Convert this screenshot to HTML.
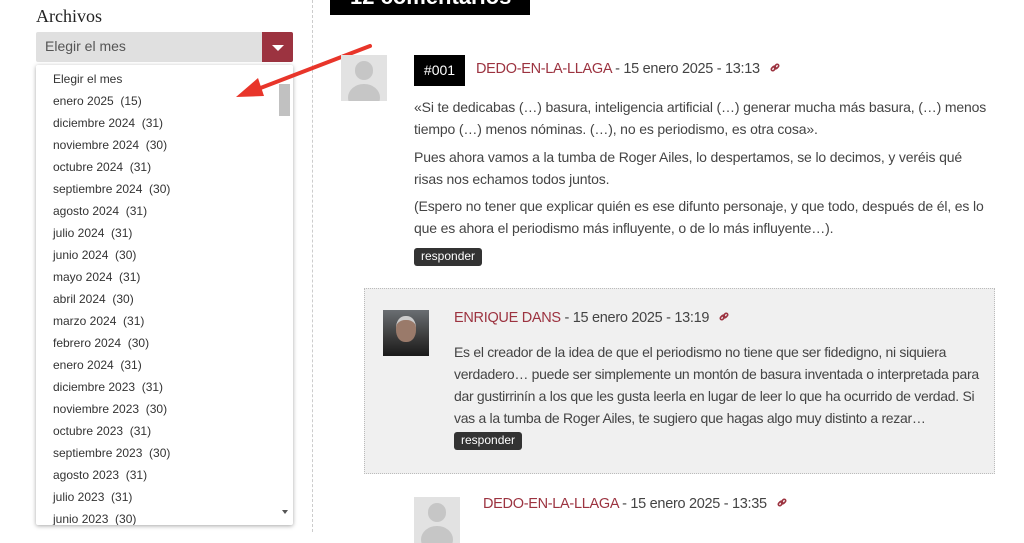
<!DOCTYPE html>
<html><head><meta charset="utf-8"><style>
*{margin:0;padding:0;box-sizing:border-box}
body{width:1024px;height:532px;overflow:hidden;background:#fff;font-family:"Liberation Sans",sans-serif;color:#444;position:relative}
.abs{position:absolute}
h3{position:absolute;left:36px;top:6px;font-family:"Liberation Serif",serif;font-weight:normal;font-size:18px;color:#222}
.sel{left:36px;top:32px;width:257px;height:30px;background:#e0e0e0;border-radius:2px;font-size:14px;color:#555;padding:6px 9px}
.btn{left:262px;top:32px;width:31px;height:30px;background:#9c3340;border-radius:0 2px 2px 0}
.btn:after{content:"";position:absolute;left:10px;top:13px;border-left:6px solid transparent;border-right:6px solid transparent;border-top:6px solid #fff}
.dd{left:36px;top:65px;width:257px;height:460px;background:#fff;box-shadow:0 1px 4px rgba(0,0,0,.35);border-radius:2px;overflow:hidden}
.dd div{position:absolute;left:17px;font-size:12px;color:#333;white-space:pre}
.sb{left:279px;top:84px;width:11px;height:32px;background:#c1c1c1}
.vl{left:312px;top:0;height:532px;border-left:1px dashed #ccc}
.title{left:330px;top:-10px;width:200px;height:25px;background:#000;color:#fff;font-weight:bold;font-size:22px;padding-left:20px;line-height:14px;overflow:hidden}
.av{background:#e2e2e2;overflow:hidden}
.av:before{content:"";position:absolute;left:30%;top:14%;width:40%;height:40%;border-radius:50%;background:#c6c6c6}
.av:after{content:"";position:absolute;left:15%;top:62%;width:70%;height:60%;border-radius:50%;background:#c6c6c6}
.num{left:414px;top:55px;width:51px;height:31px;background:#000;color:#fff;font-size:14px;text-align:center;line-height:31px}
.meta{font-size:14.5px;color:#444;white-space:nowrap;letter-spacing:-0.3px}
.meta b{font-weight:normal;color:#9c3340}
.p{font-size:14px;line-height:22px;color:#444;white-space:nowrap;width:620px;letter-spacing:-0.15px}
.rb{background:#333;color:#fff;font-size:12px;border-radius:3px;height:18px;line-height:17px;padding:0 7px}
.box{left:364px;top:288px;width:631px;height:186px;background:#f0f0f0;border:1px dotted #bbb}
</style></head><body>
<h3>Archivos</h3>
<div class="abs sel">Elegir el mes</div>
<div class="abs btn"></div>
<div class="abs dd">
<div style="top:7px">Elegir el mes</div>
<div style="top:29px">enero 2025  (15)</div>
<div style="top:51px">diciembre 2024  (31)</div>
<div style="top:73px">noviembre 2024  (30)</div>
<div style="top:95px">octubre 2024  (31)</div>
<div style="top:117px">septiembre 2024  (30)</div>
<div style="top:139px">agosto 2024  (31)</div>
<div style="top:161px">julio 2024  (31)</div>
<div style="top:183px">junio 2024  (30)</div>
<div style="top:205px">mayo 2024  (31)</div>
<div style="top:227px">abril 2024  (30)</div>
<div style="top:249px">marzo 2024  (31)</div>
<div style="top:271px">febrero 2024  (30)</div>
<div style="top:293px">enero 2024  (31)</div>
<div style="top:315px">diciembre 2023  (31)</div>
<div style="top:337px">noviembre 2023  (30)</div>
<div style="top:359px">octubre 2023  (31)</div>
<div style="top:381px">septiembre 2023  (30)</div>
<div style="top:403px">agosto 2023  (31)</div>
<div style="top:425px">julio 2023  (31)</div>
<div style="top:447px">junio 2023  (30)</div>
</div>
<div class="abs sb"></div>
<div class="abs" style="left:282px;top:510px;border-left:3px solid transparent;border-right:3px solid transparent;border-top:4px solid #555"></div>
<div class="abs vl"></div>
<div class="abs title">12 comentarios</div>
<svg class="abs" style="left:230px;top:40px" width="150" height="65"><line x1="140" y1="6" x2="20" y2="52" stroke="#e8352a" stroke-width="4" stroke-linecap="round"/><polygon points="6,57 28,38 34,56" fill="#e8352a"/></svg>

<div class="abs av" style="left:341px;top:55px;width:46px;height:46px"></div>
<div class="abs num">#001</div>
<div class="abs meta" style="left:476px;top:61px"><b>DEDO-EN-LA-LLAGA</b> - 15 enero 2025 - 13:13 <svg width="10" height="10" viewBox="0 0 10 10" style="margin-left:6px"><g fill="none" stroke="#9c3340" stroke-width="1.6"><rect x="1" y="4" width="5" height="3" rx="1.5" transform="rotate(-45 3.5 5.5)"/><rect x="4" y="2" width="5" height="3" rx="1.5" transform="rotate(-45 6.5 3.5)"/></g></svg></div>
<div class="abs p" style="left:414px;top:96px">«Si te dedicabas (…) basura, inteligencia artificial (…) generar mucha más basura, (…) menos<br>tiempo (…) menos nóminas. (…), no es periodismo, es otra cosa».</div>
<div class="abs p" style="left:414px;top:146px">Pues ahora vamos a la tumba de Roger Ailes, lo despertamos, se lo decimos, y veréis qué<br>risas nos echamos todos juntos.</div>
<div class="abs p" style="left:414px;top:195px">(Espero no tener que explicar quién es ese difunto personaje, y que todo, después de él, es lo<br>que es ahora el periodismo más influyente, o de lo más influyente…).</div>
<div class="abs rb" style="left:414px;top:248px">responder</div>

<div class="abs box"></div>
<div class="abs" style="left:383px;top:310px;width:46px;height:46px;background:linear-gradient(#6a6e72,#3a3a3a 60%,#1a1a1a)"><div style="position:absolute;left:13px;top:6px;width:20px;height:26px;border-radius:45%;background:#9a7a6a;border-top:4px solid #ccc"></div></div>
<div class="abs meta" style="left:454px;top:310px"><b>ENRIQUE DANS</b> - 15 enero 2025 - 13:19 <svg width="10" height="10" viewBox="0 0 10 10" style="margin-left:6px"><g fill="none" stroke="#9c3340" stroke-width="1.6"><rect x="1" y="4" width="5" height="3" rx="1.5" transform="rotate(-45 3.5 5.5)"/><rect x="4" y="2" width="5" height="3" rx="1.5" transform="rotate(-45 6.5 3.5)"/></g></svg></div>
<div class="abs p" style="left:454px;top:341px;letter-spacing:-0.3px">Es el creador de la idea de que el periodismo no tiene que ser fidedigno, ni siquiera<br>verdadero… puede ser simplemente un montón de basura inventada o interpretada para<br>dar gustirrinín a los que les gusta leerla en lugar de leer lo que ha ocurrido de verdad. Si<br>vas a la tumba de Roger Ailes, te sugiero que hagas algo muy distinto a rezar…</div>
<div class="abs rb" style="left:454px;top:432px">responder</div>

<div class="abs av" style="left:414px;top:497px;width:46px;height:46px"></div>
<div class="abs meta" style="left:483px;top:496px"><b>DEDO-EN-LA-LLAGA</b> - 15 enero 2025 - 13:35 <svg width="10" height="10" viewBox="0 0 10 10" style="margin-left:6px"><g fill="none" stroke="#9c3340" stroke-width="1.6"><rect x="1" y="4" width="5" height="3" rx="1.5" transform="rotate(-45 3.5 5.5)"/><rect x="4" y="2" width="5" height="3" rx="1.5" transform="rotate(-45 6.5 3.5)"/></g></svg></div>
</body></html>
